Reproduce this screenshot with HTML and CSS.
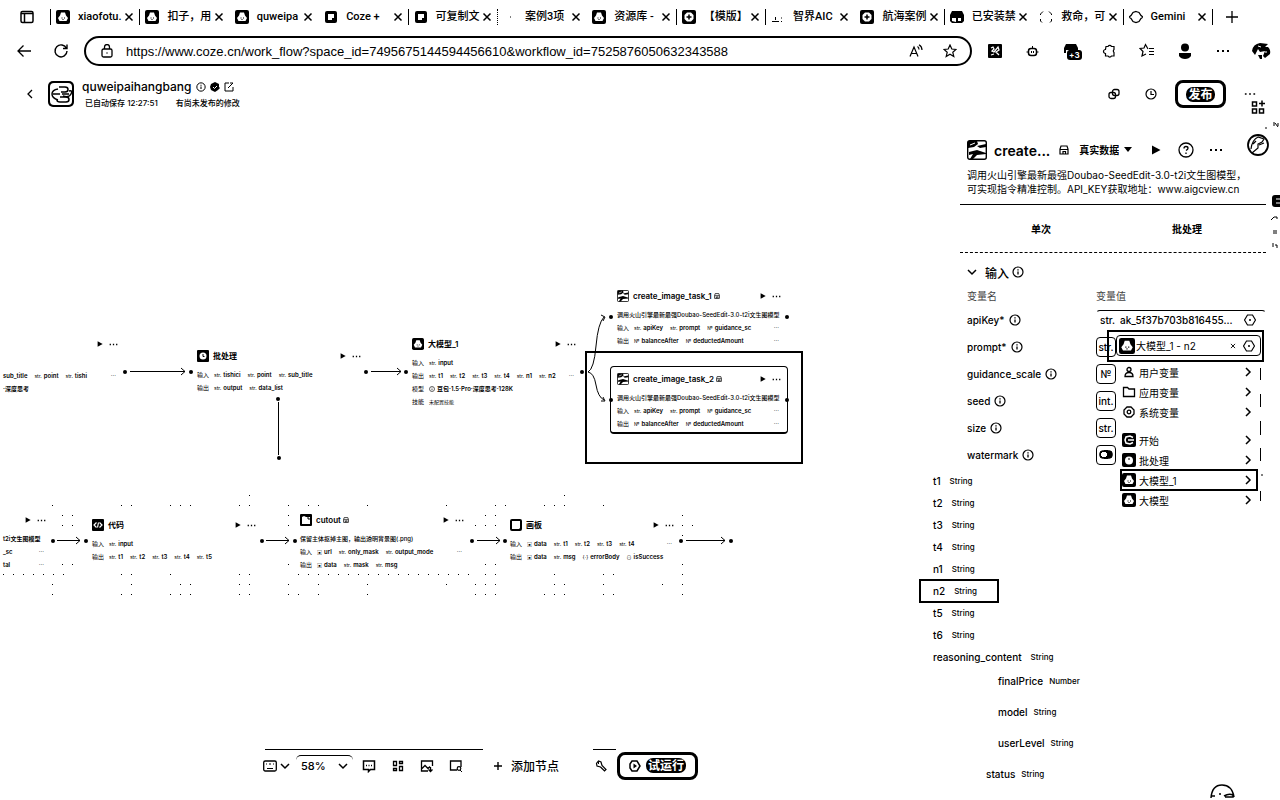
FILE: index.html
```html
<!DOCTYPE html>
<html lang="zh-CN">
<head>
<meta charset="utf-8">
<title>quweipaihangbang - Coze</title>
<link rel="stylesheet" href="styles.css">
</head>
<body>
<svg class="defs" aria-hidden="true">
  <symbol id="x" viewBox="0 0 10 10"><path d="M1.500 1.500l7 7M8.500 1.500l-7 7" fill="none" stroke="currentColor" stroke-width="1.500"/></symbol>
  <symbol id="bot" viewBox="0 0 14 14"><rect width="14" height="14" rx="2"/><path d="M5 2.500h4l1 3 2 2.500-1.500 3h-7L2 8l2-2.500z" fill="#fff"/><path d="M5.500 8h1M8 8h1M6.500 9.500h1" stroke="#000"/></symbol>
  <symbol id="cz" viewBox="0 0 14 14"><rect x="1" y="1" width="12" height="12" rx="2"/><path d="M4 4h6v4H8v2H4z" fill="#fff"/></symbol>
  <symbol id="ring" viewBox="0 0 14 14"><rect width="14" height="14" rx="2"/><path d="M5 2.500h4L11.500 5v4L9 11.500H5L2.500 9V5z" fill="#fff"/><path d="M7 4.500v5M4.500 7h5" stroke="#000" stroke-width="1.500"/></symbol>
  <symbol id="info" viewBox="0 0 12 12"><circle cx="6" cy="6" r="5" fill="none" stroke="currentColor" stroke-width="1.200"/><path d="M6 5.500v3M6 3.300v1.200" stroke="currentColor" stroke-width="1.300"/></symbol>
  <symbol id="hex" viewBox="0 0 12 12"><path d="M3.500 1h5L11.500 6l-3 5h-5L.5 6z" fill="none" stroke="currentColor" stroke-width="1.200"/><circle cx="6" cy="6" r="1"/></symbol>
  <symbol id="play" viewBox="0 0 10 10"><path d="M1 .5L9.500 5 1 9.500z"/></symbol>
  <symbol id="down" viewBox="0 0 10 10"><path d="M1 3l4 4 4-4" fill="none" stroke="currentColor" stroke-width="1.500"/></symbol>
  <symbol id="right" viewBox="0 0 10 10"><path d="M3 1l4 4-4 4" fill="none" stroke="currentColor" stroke-width="1.500"/></symbol>
  <symbol id="dots" viewBox="0 0 14 4"><path d="M1 1h2v2H1zM6 1h2v2H6zM11 1h2v2h-2z"/></symbol>
  <symbol id="pic" viewBox="0 0 20 20"><rect x=".7" y=".7" width="18.600" height="18.600" rx="2" fill="#fff" stroke="#000" stroke-width="1.400"/><path d="M1 1h9l1 3-4 3-6 1zM10 6l9-2v3l-6 1zM2 12l8-2 9 3v1l-9 1-4 4H3l3-5-4 1z"/><path d="M3 5l5-2" stroke="#fff"/></symbol>
  <symbol id="store" viewBox="0 0 10 10"><path d="M2 1h6l1 3v5H1V4zM1 4.500h8M4 9V6.500h2.500V9" fill="none" stroke="currentColor" stroke-width="1.200"/></symbol>
</svg>

<nav class="tabs" aria-label="标签页">
  <button class="side" aria-label="标签栏"><svg viewBox="0 0 14 14"><rect x="1" y="1.500" width="12" height="11" rx="1.500" fill="none" stroke="#000" stroke-width="1.500"/><path d="M1 3.500h12M4.500 3v9" stroke="#000" stroke-width="1.500"/></svg></button>
  <div class="tablist">
    <div class="tab"><svg><use href="#bot"/></svg><a href="#">xiaofotu.</a><button aria-label="关闭"><svg><use href="#x"/></svg></button></div>
    <div class="tab"><svg><use href="#bot"/></svg><a href="#">扣子，用</a><button aria-label="关闭"><svg><use href="#x"/></svg></button></div>
    <div class="tab open"><svg><use href="#bot"/></svg><a href="#">quweipa</a><button aria-label="关闭"><svg><use href="#x"/></svg></button></div>
    <div class="tab open"><svg><use href="#cz"/></svg><a href="#">Coze +</a><button aria-label="关闭"><svg><use href="#x"/></svg></button></div>
    <div class="tab"><svg><use href="#cz"/></svg><a href="#">可复制文</a><button aria-label="关闭"><svg><use href="#x"/></svg></button></div>
    <div class="tab faint"><svg viewBox="0 0 14 14"><path d="M7 7h1"  stroke="#000"/></svg><a href="#">案例3项</a><button aria-label="关闭"><svg><use href="#x"/></svg></button></div>
    <div class="tab open"><svg><use href="#bot"/></svg><a href="#">资源库 -</a><button aria-label="关闭"><svg><use href="#x"/></svg></button></div>
    <div class="tab"><svg><use href="#ring"/></svg><a href="#">【模版】</a><button aria-label="关闭"><svg><use href="#x"/></svg></button></div>
    <div class="tab"><svg viewBox="0 0 14 14"><path d="M1 11.500h7M4.500 7v3M10 11.500h1M10 8h1" stroke="#000"/></svg><a href="#">智界AIC</a><button aria-label="关闭"><svg><use href="#x"/></svg></button></div>
    <div class="tab open"><svg><use href="#ring"/></svg><a href="#">航海案例</a><button aria-label="关闭"><svg><use href="#x"/></svg></button></div>
    <div class="tab"><svg viewBox="0 0 14 14"><path d="M2 1h10l2 4v6l-2 2H2l-2-2V5z"/><path d="M2 11V8h4v4zM8 11V8h3v3z" fill="#fff"/></svg><a href="#">已安装禁</a><button aria-label="关闭"><svg><use href="#x"/></svg></button></div>
    <div class="tab open"><svg viewBox="0 0 14 14"><path d="M4 1.500L1.500 4v1M10 1.500L12.500 4v1M1.500 9v2L3 12.500M12.500 9v2L11 12.500" fill="none" stroke="#000"/></svg><a href="#">救命，可</a><button aria-label="关闭"><svg><use href="#x"/></svg></button></div>
    <div class="tab"><svg viewBox="0 0 14 14"><path d="M7 1.500l3 1 2 3 2 1.500-2 1.500-2 3-3 1-3-1-2-3L0 7l2-1.500 2-3z" fill="none" stroke="#000" stroke-width="1.300"/></svg><a href="#">Gemini</a><button aria-label="关闭"><svg><use href="#x"/></svg></button></div>
  </div>
  <button class="newtab" aria-label="新建标签页"><svg viewBox="0 0 14 14"><path d="M7 1v12M1 7h12" stroke="#000" stroke-width="1.300"/></svg></button>
</nav>

<div class="bar">
  <button aria-label="后退"><svg class="i16" viewBox="0 0 16 16"><path d="M14 8H1M6.500 2.500L1 8l5.500 5.500" fill="none" stroke="#000" stroke-width="1.300"/></svg></button>
  <button aria-label="刷新"><svg class="i16" viewBox="0 0 16 16"><path d="M13.500 5.500A6 6 0 1 0 14 8M14 1.500v4h-4" fill="none" stroke="#000" stroke-width="1.400"/></svg></button>
  <div class="url">
    <svg class="i14" viewBox="0 0 14 14"><rect x="2" y="5" width="10" height="8" rx="1.500" fill="none" stroke="#000" stroke-width="1.300"/><path d="M4.500 5V3a2.500 2.500 0 0 1 5 0v2M6.500 9h1" fill="none" stroke="#000" stroke-width="1.300"/></svg>
    <input aria-label="地址" value="https://www.coze.cn/work_flow?space_id=7495675144594456610&amp;workflow_id=7525876050632343588">
    <button class="read" aria-label="朗读"><svg class="i14" viewBox="0 0 14 14"><path d="M1 12.500L5 3l4 9.500M2.500 9.500h5M8.500 2.500q1.500 1 1.500 3M10 .8q3 1.700 3 5.200" fill="none" stroke="#000" stroke-width="1.200"/></svg></button>
    <button aria-label="收藏"><svg class="i14" viewBox="0 0 14 14"><path d="M7 1l1.800 4 4.200.4-3.200 2.900 1 4.200L7 10.300l-3.800 2.200 1-4.200L1 5.400 5.200 5z" fill="none" stroke="#000" stroke-width="1.200"/></svg></button>
  </div>
  <div class="ext">
    <button aria-label="扩展一"><svg class="i14" viewBox="0 0 14 14"><rect width="14" height="14" rx="1"/><path d="M3 4l2-1 1 2-2 2 2 1 4-5 1 3-3 2 3 3M3 11l3-1" fill="none" stroke="#fff" stroke-width="1.300"/></svg></button>
    <button aria-label="助手"><svg class="i14" viewBox="0 0 14 14"><rect x="2.500" y="4.500" width="8" height="7" rx="2.500" fill="none" stroke="#000" stroke-width="1.500"/><path d="M6.500 2V4.500M0.500 8H2M11 8h1.500M5.500 7v2M7.500 7v2" stroke="#000"/></svg></button>
    <button class="plus" aria-label="扩展二"><svg class="i16" viewBox="0 0 16 16"><path d="M3 1h10l2 4v5H1V5z"/><path d="M3 10V7h3v3zM9 9V7h3v2z" fill="#fff"/></svg><span>+3</span></button>
    <button aria-label="扩展程序"><svg class="i14" viewBox="0 0 14 14"><path d="M4 2.500h2a2 2 0 0 1 3.500 0H12V5.500a2 2 0 0 0 0 3V12H9.500a2 2 0 0 1-3.500 0H3.500V9.500a2 2 0 0 1 0-4z" fill="none" stroke="#000" stroke-width="1.200"/></svg></button>
    <button aria-label="收藏夹"><svg class="i16" viewBox="0 0 16 16"><path d="M9 6L6.500 1.500 5 5 1 5.500l3 3-1 4.500L7 11M10 5.500h5M10 8.500h5M10 11.500h5" fill="none" stroke="#000" stroke-width="1.200"/></svg></button>
    <button aria-label="个人"><svg class="i16" viewBox="0 0 16 16"><circle cx="8" cy="4.500" r="4"/><path d="M2 10h12v3q-2 3-6 3t-6-3z"/></svg></button>
    <button aria-label="更多"><svg class="i14" viewBox="0 0 14 4"><use href="#dots"/></svg></button>
    <button aria-label="Copilot"><svg class="i20" viewBox="0 0 20 20"><path d="M1 10q1-7 8-8l8 1-3 3h3q3 3 2 7l-5 4-2-2 2-5-5 1-2-3-3 6zM7 14h4v4H9z"/><path d="M7 5l3 1M14 11h2" stroke="#fff"/></svg></button>
  </div>
</div>

<header class="app">
  <button aria-label="返回"><svg class="i10" viewBox="0 0 10 10"><path d="M7 1L3 5l4 4" fill="none" stroke="#000" stroke-width="1.300"/></svg></button>
  <svg class="logo" viewBox="0 0 26 26"><rect width="26" height="26" rx="5"/><rect x="2" y="2" width="22" height="22" rx="4" fill="#fff"/><g fill="none" stroke="#000" stroke-width="1.500"><path d="M11 6h6q3 0 3 2.500T17 11h-4M12 16h6q3 0 3 2.500T18 21h-6q-3 0-3-2"/><path d="M14 13h7M15 15q6 2 8-2t-2-3M10 8q-6 1-6 5t6 6M5 13h7"/></g></svg>
  <div class="names">
    <h1>quweipaihangbang <svg class="i10"><use href="#info"/></svg><svg class="i10" viewBox="0 0 10 10"><path d="M5 0l2 1 2 1v3l1 1-2 2-3 2-2-1-2-1-1-3 1-3 2-1z"/><path d="M3 5l1.500 1.500L7 4" stroke="#fff" fill="none"/></svg><svg class="i10" viewBox="0 0 10 10"><path d="M5 1H1v8h8V5M4 6l5-5M6 1h3" fill="none" stroke="#000"/></svg></h1>
    <p><span>已自动保存 12:27:51</span><span>有尚未发布的修改</span></p>
  </div>
  <div class="acts">
    <button aria-label="复制"><svg class="i12" viewBox="0 0 12 12"><rect x="1" y="4.500" width="6.500" height="6" rx="2" fill="none" stroke="#000" stroke-width="1.300"/><rect x="4.500" y="1.500" width="6.500" height="6" rx="2" fill="none" stroke="#000" stroke-width="1.300"/></svg></button>
    <button aria-label="历史"><svg class="i12" viewBox="0 0 12 12"><circle cx="6" cy="6" r="5" fill="none" stroke="#000" stroke-width="1.200"/><path d="M6 3v3.500h3" fill="none" stroke="#000" stroke-width="1.200"/></svg></button>
    <button class="solid"><span>发布</span></button>
    <button class="more" aria-label="更多"><svg viewBox="0 0 14 4"><use href="#dots"/></svg></button>
  </div>
  <svg class="apps" viewBox="0 0 14 14"><path d="M1.500 2h4v4h-4zM1.500 9h4v4h-4zM8.500 9h4v4h-4zM8 3.500h6M11 .5v6" fill="none" stroke="#000" stroke-width="1.500"/></svg>
</header>

<main>
  <section class="canvas" aria-label="工作流画布">
    <svg class="edges" width="960" height="680" aria-hidden="true">
      <g class="lines">
        <path d="M130 251.500h55M181 248l4 3.500-4 3.500M371 251.500h30M397 248l4 3.500-4 3.500M278.500 282v53M57 420.500h23M76 417l4 3.500-4 3.500M266 420.500h23M285 417l4 3.500-4 3.500M477 420.500h23M496 417l4 3.500-4 3.500M686 420.500h39M721 417l4 3.500-4 3.500"/>
        <path d="M588 252q6-3 8-26t8-29M601 195l4 2-2 4M588 252q6 1 8 13t8 15M601 281h4l-2-4"/>
      </g>
      <path class="grid" d="M249 375h1M52 385h1M121 385h1M131 385h1M170 385h1M180 385h1M190 385h1M239 385h1M249 385h1M288 385h1M308 385h1M318 385h1M367 385h1M62 395h1M72 395h1M288 395h1M62 405h1M72 405h1M288 405h1M62 444h1M72 444h1M288 444h1M121 454h1M131 454h1M170 454h1M239 454h1M249 454h1M52 464h1M131 464h1M180 464h1M190 464h1M239 464h1M249 464h1M288 464h1M318 464h1M367 464h1M52 474h1M121 474h1M131 474h1M170 474h1M180 474h1M190 474h1M239 474h1M249 474h1M288 474h1M298 474h1M318 474h1M367 474h1M564 375h1M446 385h1M495 385h1M505 385h1M544 385h1M554 385h1M564 385h1M603 385h1M485 395h1M495 395h1M682 395h1M475 405h1M485 405h1M495 405h1M682 405h1M692 405h1M682 415h1M485 444h1M495 444h1M682 444h1M485 454h1M495 454h1M554 454h1M603 454h1M613 454h1M682 454h1M446 464h1M475 464h1M485 464h1M495 464h1M554 464h1M564 464h1M603 464h1M662 464h1M682 464h1M475 474h1M485 474h1M495 474h1M544 474h1M554 474h1M564 474h1M603 474h1M613 474h1M682 474h1"/>
      <path class="grid dashed" d="M3 454h65M298 454h175"/>
      <g><circle cx="125" cy="252" r="2"/><circle cx="191" cy="252" r="2"/><circle cx="366" cy="252" r="2"/><circle cx="406" cy="252" r="2"/><circle cx="582" cy="252" r="2"/><circle cx="278" cy="279" r="2"/><circle cx="279" cy="338" r="2"/><circle cx="611" cy="197" r="2"/><circle cx="787" cy="197" r="2"/><circle cx="611" cy="280" r="2"/><circle cx="787" cy="280" r="2"/><circle cx="53" cy="421" r="2"/><circle cx="86" cy="421" r="2"/><circle cx="262" cy="421" r="2"/><circle cx="295" cy="421" r="2"/><circle cx="472" cy="421" r="2"/><circle cx="505" cy="421" r="2"/><circle cx="681" cy="421" r="2"/><circle cx="731" cy="421" r="2"/></g>
    </svg>

    <div class="mark"></div>

    <article class="node n0">
      <header><svg class="run"><use href="#play"/></svg><svg class="dt"><use href="#dots"/></svg></header>
      <p></p>
      <p><b>sub_title</b><i>str.</i><b>point</b><i>str.</i><b>tishi</b><em>···</em></p>
      <p><b>·深度思考</b></p>
    </article>
    <article class="node n1">
      <header><svg class="ic" viewBox="0 0 12 12"><rect width="12" height="12" rx="1"/><circle cx="6" cy="6" r="3.500" fill="#fff"/><path d="M6 4v2.500h1.500" fill="none" stroke="#000"/></svg><h2>批处理</h2><svg class="run"><use href="#play"/></svg><svg class="dt"><use href="#dots"/></svg></header>
      <p><span>输入</span><i>str.</i><b>tishici</b><i>str.</i><b>point</b><i>str.</i><b>sub_title</b></p>
      <p><span>输出</span><i>str.</i><b>output</b><i>str.</i><b>data_list</b></p>
    </article>
    <article class="node n2">
      <header><svg class="ic"><use href="#bot"/></svg><h2>大模型_1</h2><svg class="run"><use href="#play"/></svg><svg class="dt"><use href="#dots"/></svg></header>
      <p><span>输入</span><i>str.</i><b>input</b></p>
      <p><span>输出</span><i>str.</i><b>t1</b><i>str.</i><b>t2</b><i>str.</i><b>t3</b><i>str.</i><b>t4</b><i>str.</i><b>n1</b><i>str.</i><b>n2</b><em>···</em></p>
      <p><span>模型</span><svg class="mini"><use href="#info"/></svg><b>豆包·1.5·Pro·深度思考·128K</b></p>
      <p><span>技能</span><i>未配置技能</i></p>
    </article>
    <article class="node n3">
      <header><svg class="ic"><use href="#pic"/></svg><h2>create_image_task_1 <svg class="mini"><use href="#store"/></svg></h2><svg class="run"><use href="#play"/></svg><svg class="dt"><use href="#dots"/></svg></header>
      <p class="desc">调用火山引擎最新最强Doubao-SeedEdit-3.0-t2i文生图模型</p>
      <p><span>输入</span><i>str.</i><b>apiKey</b><i>str.</i><b>prompt</b><i>№</i><b>guidance_sc</b><em>···</em></p>
      <p><span>输出</span><i>№</i><b>balanceAfter</b><i>№</i><b>deductedAmount</b><em>···</em></p>
    </article>
    <article class="node n4">
      <header><svg class="ic"><use href="#pic"/></svg><h2>create_image_task_2 <svg class="mini"><use href="#store"/></svg></h2><svg class="run"><use href="#play"/></svg><svg class="dt"><use href="#dots"/></svg></header>
      <p class="desc">调用火山引擎最新最强Doubao-SeedEdit-3.0-t2i文生图模型</p>
      <p><span>输入</span><i>str.</i><b>apiKey</b><i>str.</i><b>prompt</b><i>№</i><b>guidance_sc</b><em>···</em></p>
      <p><span>输出</span><i>№</i><b>balanceAfter</b><i>№</i><b>deductedAmount</b><em>···</em></p>
    </article>
    <article class="node n5">
      <header><svg class="run"><use href="#play"/></svg><svg class="dt"><use href="#dots"/></svg></header>
      <p><b>t2i文生图模型</b></p>
      <p><b>_sc</b><em>···</em></p>
      <p><b>tal</b><em>···</em></p>
    </article>
    <article class="node n6">
      <header><svg class="ic" viewBox="0 0 12 12"><rect width="12" height="12" rx="1"/><path d="M4.500 3.500L2 6l2.500 2.500M7.500 3.500L10 6 7.500 8.500M6.500 3.500l-1 5" fill="none" stroke="#fff" stroke-width="1.200"/></svg><h2>代码</h2><svg class="run"><use href="#play"/></svg><svg class="dt"><use href="#dots"/></svg></header>
      <p><span>输入</span><i>str.</i><b>input</b></p>
      <p><span>输出</span><i>str.</i><b>t1</b><i>str.</i><b>t2</b><i>str.</i><b>t3</b><i>str.</i><b>t4</b><i>str.</i><b>t5</b></p>
    </article>
    <article class="node n7">
      <header><svg class="ic" viewBox="0 0 12 12"><rect width="12" height="12" rx="1"/><path d="M2 3l2-1 2 1h4v7H2z" fill="#fff"/><path d="M8 2v3h3" stroke="#000" fill="none"/></svg><h2>cutout <svg class="mini"><use href="#store"/></svg></h2><svg class="run"><use href="#play"/></svg><svg class="dt"><use href="#dots"/></svg></header>
      <p class="desc">保留主体抠掉主图，输出透明背景图(.png)</p>
      <p><span>输入</span><i>▣</i><b>url</b><i>str.</i><b>only_mask</b><i>str.</i><b>output_mode</b><em>···</em></p>
      <p><span>输出</span><i>▣</i><b>data</b><i>str.</i><b>mask</b><i>str.</i><b>msg</b></p>
    </article>
    <article class="node n8">
      <header><svg class="ic" viewBox="0 0 12 12"><rect x="1" y="1" width="10" height="10" rx="1" fill="#fff" stroke="#000" stroke-width="2"/><path d="M8 11l3-3v3z"/></svg><h2>画板</h2><svg class="run"><use href="#play"/></svg><svg class="dt"><use href="#dots"/></svg></header>
      <p><span>输入</span><i>▣</i><b>data</b><i>str.</i><b>t1</b><i>str.</i><b>t2</b><i>str.</i><b>t3</b><i>str.</i><b>t4</b><em>···</em></p>
      <p><span>输出</span><i>▣</i><b>data</b><i>str.</i><b>msg</b><i>{·}</i><b>errorBody</b><i>⊙</i><b>isSuccess</b></p>
    </article>
  </section>

  <aside class="panel">
    <div class="ptitle">
      <svg class="i20"><use href="#pic"/></svg><h2>create...</h2><svg class="i10"><use href="#store"/></svg>
      <label class="mode"><select aria-label="数据来源"><option>真实数据</option></select><svg viewBox="0 0 8 6"><path d="M0 0h8L4 5z"/></svg></label>
      <button aria-label="运行"><svg class="i10"><use href="#play"/></svg></button>
      <button aria-label="帮助"><svg class="i16" viewBox="0 0 16 16"><circle cx="8" cy="8" r="7" fill="none" stroke="#000" stroke-width="1.300"/><path d="M6 6.500q0-2 2-2t2 1.700q0 1-2 2.300M8 10.500v1.500" fill="none" stroke="#000" stroke-width="1.300"/></svg></button>
      <button aria-label="更多"><svg class="i14" viewBox="0 0 14 4"><use href="#dots"/></svg></button>
    </div>
    <p class="about">调用火山引擎最新最强Doubao-SeedEdit-3.0-t2i文生图模型，可实现指令精准控制。API_KEY获取地址：www.aigcview.cn</p>
    <div class="modes"><button>单次</button><button>批处理</button></div>
    <h3><svg class="i10"><use href="#down"/></svg>输入<svg class="i12"><use href="#info"/></svg></h3>
    <div class="fields">
      <span class="th">变量名</span><span class="th">变量值</span>
      <label for="f1">apiKey* <svg class="i12"><use href="#info"/></svg></label><div class="field wide"><span>str.</span><input id="f1" value="ak_5f37b703b816455..."><svg class="i12"><use href="#hex"/></svg></div>
      <label for="f2">prompt* <svg class="i12"><use href="#info"/></svg></label><div class="field"><input id="f2" value="str."></div>
      <label for="f3">guidance_scale <svg class="i12"><use href="#info"/></svg></label><div class="field"><input id="f3" value="№"></div>
      <label for="f4">seed <svg class="i12"><use href="#info"/></svg></label><div class="field"><input id="f4" value="int."></div>
      <label for="f5">size <svg class="i12"><use href="#info"/></svg></label><div class="field"><input id="f5" value="str."></div>
      <label for="f6">watermark <svg class="i12"><use href="#info"/></svg></label><div class="field"><input id="f6" class="switch" type="checkbox" checked></div>
    </div>
    <ul class="outs">
      <li><b>finalPrice</b>Number</li>
      <li><b>model</b>String</li>
      <li><b>userLevel</b>String</li>
      <li class="outer"><b>status</b>String</li>
    </ul>

    <div class="menu">
      <div class="picked"><div><svg class="i16"><use href="#bot"/></svg><span>大模型_1 - n2</span><button aria-label="清除"><svg class="i6"><use href="#x"/></svg></button><svg class="i12"><use href="#hex"/></svg></div></div>
      <div class="list">
        <button><svg class="i14" viewBox="0 0 14 14"><circle cx="7" cy="4.500" r="2" fill="none" stroke="#000" stroke-width="1.300"/><path d="M3 11.500q0-4 4-4t4 4z" fill="none" stroke="#000" stroke-width="1.300"/></svg><span>用户变量</span><svg class="i10"><use href="#right"/></svg></button>
        <button><svg class="i14" viewBox="0 0 14 14"><path d="M1.500 2.500h4L7 4h5.500v7.500h-11z" fill="none" stroke="#000" stroke-width="1.300"/></svg><span>应用变量</span><svg class="i10"><use href="#right"/></svg></button>
        <button><svg class="i14" viewBox="0 0 14 14"><path d="M5 2h4l3 3v4l-3 3H5L2 9V5z" fill="none" stroke="#000" stroke-width="1.300"/><circle cx="7" cy="7" r="1.800" fill="none" stroke="#000" stroke-width="1.300"/></svg><span>系统变量</span><svg class="i10"><use href="#right"/></svg></button>
      </div>
      <div class="list nodes">
        <button><svg class="i14" viewBox="0 0 14 14"><rect width="14" height="14" rx="2"/><path d="M11 4.500L8 3 4 4 3 7l1 3 4 1 3-1.500M6 7h6" fill="none" stroke="#fff" stroke-width="1.500"/></svg><span>开始</span><svg class="i10"><use href="#right"/></svg></button>
        <button><svg class="i14" viewBox="0 0 14 14"><rect width="14" height="14" rx="2"/><circle cx="7" cy="7.500" r="4" fill="#fff"/><path d="M7 5v2" stroke="#000"/></svg><span>批处理</span><svg class="i10"><use href="#right"/></svg></button>
        <button class="on"><svg class="i14"><use href="#bot"/></svg><span>大模型_1</span><svg class="i10"><use href="#right"/></svg></button>
        <button><svg class="i14"><use href="#bot"/></svg><span>大模型</span><svg class="i10"><use href="#right"/></svg></button>
      </div>
    </div>

    <ul class="tree">
      <li><b>t1</b>String</li>
      <li><b>t2</b>String</li>
      <li><b>t3</b>String</li>
      <li><b>t4</b>String</li>
      <li><b>n1</b>String</li>
      <li class="on"><b>n2</b>String</li>
      <li><b>t5</b>String</li>
      <li><b>t6</b>String</li>
      <li><b>reasoning_content</b>String</li>
    </ul>

    <svg class="edge-marks" viewBox="0 0 40 680" aria-hidden="true">
      <circle cx="18" cy="25" r="10" fill="#fff" stroke="#000" stroke-width="1.800"/><path d="M11 29q1-9 7-12l6 2-2 3-4 2v4l-6 5M19 25l5-2M13 24l3-3" fill="none" stroke="#000" stroke-width="1.200"/><path d="M25 8h2M34 2v4M35 3l3 4M38 3v3" stroke="#000"/>
      <path d="M40 75h-5q-3 0-3 3v6q0 3 3 3h5z"/><path d="M36 79h4M36 83h4" stroke="#fff"/>
      <path d="M31 100l3-3h3v2M34 110v4M36 110v4M33 123v4M35 125h2v3" fill="none" stroke="#000"/>
      <path d="M20.500 248v12M20.500 274v13M20.500 301v14M20.500 328v13M21 355h2M20.500 371v10" stroke="#000"/>
    </svg>
    <svg class="face" viewBox="0 0 26 14" aria-hidden="true"><path d="M2 14Q3 1 13 1t12 12M2 12h4M10 10h2M15 12q5-3 9-1v2h-8" fill="none" stroke="#000" stroke-width="1.500"/></svg>
  </aside>

  <div class="dock">
    <div class="group">
      <button class="kb" aria-label="交互模式"><svg class="i14" viewBox="0 0 14 14"><rect x=".7" y="2" width="12.600" height="10" rx="1.500" fill="none" stroke="#000" stroke-width="1.300"/><path d="M4 9.500h6M3 5h1M6 5h2M10 5h1" stroke="#000"/></svg><svg class="i10"><use href="#down"/></svg></button>
      <label class="zoom"><select aria-label="缩放"><option>58%</option></select><svg class="i10"><use href="#down"/></svg></label>
      <button aria-label="注释"><svg class="i14" viewBox="0 0 14 14"><path d="M1.500 2h11v8.500h-4L6.500 12.500V10.500h-5z" fill="none" stroke="#000" stroke-width="1.500"/><path d="M4 6.500h1M6.500 6.500h1M9 6.500h1" stroke="#000" stroke-width="1.500"/></svg></button>
      <button aria-label="整理"><svg class="i14" viewBox="0 0 14 14"><path d="M2.500 2.500h3v4h-3zM8.500 2.500h3v2h-3zM2.500 9.500h3v2h-3zM8.500 7.500h3v4h-3z" fill="none" stroke="#000" stroke-width="1.300"/></svg></button>
      <button aria-label="导出图片"><svg class="i14" viewBox="0 0 14 14"><path d="M8 12H1.500V2h11v5M2 9.500l3-3 3 3 2-2M10.500 8v4.500M8.500 10.500l2 2 2-2" fill="none" stroke="#000" stroke-width="1.300"/></svg></button>
      <button aria-label="缩略图"><svg class="i14" viewBox="0 0 14 14"><path d="M8 11H1.500V2h10.500v6" fill="none" stroke="#000" stroke-width="1.300"/><circle cx="10" cy="9.500" r="1.800" fill="none" stroke="#000" stroke-width="1.200"/><path d="M11 11l2 2" stroke="#000"/></svg></button>
      <button class="add"><svg class="i10" viewBox="0 0 10 10"><path d="M5 1v8M1 5h8" stroke="#000" stroke-width="1.400"/></svg>添加节点</button>
    </div>
    <div class="group two">
      <button aria-label="调试"><svg class="i12" viewBox="0 0 12 12"><path d="M5.500 7L9.500 11l1.500-1.500-4-4L6 2 3.500 1 1.500 3.500 2 6z" fill="none" stroke="#000" stroke-width="1.200"/><path d="M3.500 1.500v2.500" stroke="#000"/></svg></button>
      <button class="solid"><svg class="i12" viewBox="0 0 12 12"><path d="M3 1h5l3 5-3 5H3L1 8V4z" fill="none" stroke="#000" stroke-width="1.500"/><path d="M4.500 3.500L8 6 4.500 8.500z"/></svg><span>试运行</span></button>
    </div>
  </div>
</main>
</body>
</html>
```
FILE: styles.css
```css
* { box-sizing: border-box; margin: 0; padding: 0; }
body {
  min-height: 100vh;
  display: flex;
  flex-direction: column;
  background: #fff;
  color: #000;
  font-family: Inter, "Noto Sans CJK SC", sans-serif;
  font-size: 10px;
  overflow-x: hidden;
}
button, input, select { font: inherit; color: inherit; background: none; border: 0; outline: 0; appearance: none; }
button { display: flex; align-items: center; justify-content: center; cursor: pointer; }
a { color: inherit; text-decoration: none; }
svg { display: block; flex: none; }
ul { list-style: none; }
.defs { position: absolute; width: 0; height: 0; }
.i6 { width: 6px; height: 6px; }
.i10 { width: 10px; height: 10px; }
.i12 { width: 12px; height: 12px; }
.i14 { width: 14px; height: 14px; }
.i16 { width: 16px; height: 16px; }
.i20 { width: 20px; height: 20px; }

/* Browser tabs */
.tabs { display: flex; align-items: center; height: 34px; padding-right: 41px; }
.side { width: 50px; padding-left: 4px; }
.side svg { width: 14px; height: 14px; }
.tablist { flex: 1; display: grid; grid-template-columns: repeat(13, minmax(0, 1fr)); border-right: 1px solid #000; }
.tab { display: flex; align-items: center; height: 16px; padding: 0 5px; border-left: 1px solid #000; font-family: Roboto, "Noto Sans CJK SC", sans-serif; font-size: 11px; font-weight: 500; }
.tab.open { border-color: transparent; }
.tab.faint { border-left-style: dotted; }
.tab > svg { width: 14px; height: 14px; margin-right: 8px; }
.tab a { flex: 1; white-space: nowrap; line-height: 16px; }
.tab button svg { width: 10px; height: 10px; }
.newtab { width: 14px; margin-left: 12px; }
.newtab svg { width: 14px; height: 14px; }

/* Address bar */
.bar { display: flex; align-items: center; height: 34px; padding-left: 17px; }
.bar > button + button { margin: 0 15px 0 20px; }
.url { flex: 1; display: flex; align-items: center; height: 30px; padding: 0 13px 0 14px; border: 2px solid #000; border-radius: 15px; font-family: "Liberation Sans", sans-serif; font-size: 13px; }
.url input { flex: 1; min-width: 0; padding-left: 12px; }
.read { margin-right: 20px; }
.ext { display: grid; grid-template-columns: repeat(8, 38px); margin-left: 4px; justify-items: center; align-items: center; }
.plus { position: relative; }
.plus span { position: absolute; left: 4px; top: 7px; padding: 0 2px; border-radius: 3px; background: #000; color: #fff; font-size: 8px; font-weight: 700; line-height: 10px; }

/* App header */
.app { display: flex; align-items: center; height: 52px; padding: 0 24px 0 25px; position: relative; }
.logo { width: 26px; height: 26px; margin: 0 8px 0 13px; }
.names h1 { display: flex; align-items: center; gap: 4px; font-size: 12px; font-weight: 500; line-height: 18px; }
.names p { display: flex; gap: 18px; padding-left: 3px; font-size: 8px; font-weight: 500; line-height: 14px; }
.acts { display: flex; align-items: center; margin-left: auto; }
.acts > button + button { margin-left: 25px; }
.acts > .solid + .more, .acts > button + .solid { margin-left: 18px; }
.acts .solid { width: 51px; }
.acts .more svg { width: 12px; height: 4px; }
.solid { gap: 5px; height: 28px; border: 3px solid #000; border-radius: 8px; font-size: 12px; font-weight: 700; }
.solid span { padding: 0 2px; border-radius: 7px; background: #000; color: #fff; line-height: 15px; }
.apps { position: absolute; right: 15px; bottom: 6px; width: 14px; height: 14px; }

/* Workspace */
main { flex: 1; display: grid; grid-template-columns: minmax(0, 1fr) 320px; position: relative; }
.canvas { position: relative; overflow: hidden; }
.edges { position: absolute; left: 0; top: 0; }
.lines { fill: none; stroke: #000; }
.grid { stroke: #000; stroke-width: 1; shape-rendering: crispEdges; }
.dashed { stroke-dasharray: 1 9; }
.mark { position: absolute; left: 585px; top: 231px; width: 218px; height: 113px; border: 2px solid #000; }

.node { position: absolute; width: 170px; font-size: 6px; }
.node header { display: flex; align-items: center; height: 12px; margin-bottom: 6px; }
.node h2 { display: flex; align-items: center; gap: 2px; font-size: 8px; font-weight: 600; line-height: 12px; white-space: nowrap; }
.ic { width: 12px; height: 12px; margin-right: 4px; }
.mini { width: 6px; height: 6px; }
.run { width: 6px; height: 6px; margin-left: auto; }
.dt { width: 9px; height: 3px; margin: 0 6px; }
.node p { display: flex; align-items: center; height: 13px; gap: 2px; white-space: nowrap; }
.node span { margin-right: 3px; }
.node i { font-style: normal; font-size: 5px; }
.node b { font-weight: 600; margin-right: 5px; }
.node em { margin-left: auto; margin-right: 8px; font-style: normal; }
.node .desc { font-weight: 500; }
.n0 { left: 3px; top: 218px; width: 121px; }
.n1 { left: 197px; top: 230px; }
.n2 { left: 412px; top: 218px; }
.n3 { left: 617px; top: 170px; }
.n4 { left: 610px; top: 246px; width: 178px; padding: 6px 0 6px 6px; border: 1px solid #000; border-bottom-width: 2px; border-radius: 4px; height: 68px; }
.n5 { left: 3px; top: 394px; width: 49px; }
.n6 { left: 92px; top: 399px; }
.n7 { left: 300px; top: 394px; }
.n8 { left: 510px; top: 399px; }

/* Settings panel */
.panel { position: relative; padding: 20px 14px 0 0; }
.ptitle { display: flex; align-items: center; height: 20px; padding-left: 7px; }
.ptitle h2 { margin: 0 9px 0 7px; font-size: 14px; font-weight: 600; }
.mode { display: flex; align-items: center; gap: 5px; margin-left: 10px; font-weight: 600; }
.mode svg { width: 8px; height: 6px; }
.ptitle button { margin-left: 19px; }
.ptitle button + button { margin-left: 17px; }
.ptitle button:last-child { margin-left: 15px; }
.about { padding: 8px 12px 8px 7px; line-height: 14px; border-bottom: 1px solid #000; }
.modes { display: grid; grid-template-columns: 1fr 1fr; height: 48px; padding: 0 6px 0 8px; border-bottom: 1px dashed #000; font-weight: 600; }
.panel h3 { display: flex; align-items: center; height: 38px; padding-left: 7px; font-size: 12px; font-weight: 500; }
.panel h3 svg:first-child { margin-right: 8px; }
.panel h3 svg:last-child { margin-left: 3px; }
.fields { display: grid; grid-template-columns: 129px 1fr; grid-template-rows: 22px; grid-auto-rows: 27px; align-items: center; padding-left: 7px; margin-top: -7px; }
.th { color: #444; }
.fields label { display: flex; align-items: center; gap: 4px; font-weight: 500; }
.field { display: flex; align-items: center; width: 20px; height: 20px; border: 1px solid #000; border-radius: 4px; font-weight: 500; }
.field input { width: 100%; min-width: 0; text-align: center; }
.wide { width: auto; padding: 0 9px 0 3px; border-left-color: transparent; border-right-color: transparent; border-bottom-color: transparent; }
.wide input { flex: 1; text-align: left; padding-left: 5px; }
.field .switch { width: 14px; height: 9px; margin: auto; border: 1px solid #000; border-radius: 5px; background: radial-gradient(circle at 4px 50%, #fff 3px, #000 3px); }
.outs { padding: 197px 0 0 38px; font-size: 8px; font-weight: 500; }
.outs li { display: flex; align-items: center; gap: 6px; height: 31px; }
.outs b { font-size: 10px; font-weight: 500; }
.outs .outer { margin-left: -12px; }

/* Variable picker */
.menu { position: absolute; left: 147px; top: 210px; width: 157px; }
.picked { height: 32px; padding: 3px 1px 4px 7px; border: 2px solid #000; }
.picked div { display: flex; align-items: center; gap: 1px; height: 21px; padding: 0 5px 0 2px; background: #fff; border: 1px solid #000; border-radius: 4px; white-space: nowrap; }
.picked button { margin: 0 6px 0 auto; }
.list { margin-left: 10px; padding: 0 7px 0 4px; background: #fff; }
.list button { width: 100%; height: 20px; padding: 0 4px 0 1px; }
.list span { flex: 1; padding-left: 3px; text-align: left; }
.nodes { padding-top: 8px; }
.list .on { outline: 2px solid #000; outline-offset: -1px; }

.tree { position: absolute; left: -40px; top: 350px; width: 150px; font-size: 8px; font-weight: 500; }
.tree li { display: flex; align-items: center; gap: 9px; height: 22px; padding-left: 13px; white-space: nowrap; }
.tree b { font-size: 10px; font-weight: 500; }
.tree .on { width: 78px; outline: 2px solid #000; outline-offset: -1px; }
.edge-marks { position: absolute; right: 0; top: 0; width: 40px; height: 680px; pointer-events: none; }
.face { position: absolute; right: 45px; bottom: 2px; width: 26px; height: 14px; }

/* Bottom dock */
.dock { position: absolute; left: 257px; bottom: 18px; display: flex; align-items: center; gap: 30px; height: 33px; }
.group { display: flex; align-items: center; gap: 15px; height: 33px; padding-left: 6px; background: linear-gradient(#000, #000) 8px 0 / 218px 1px no-repeat; }
.kb { gap: 3px; margin-right: -9px; }
.zoom { display: flex; align-items: center; width: 57px; height: 21px; padding: 0 5px; border-top: 1px solid #000; border-radius: 5px; font-size: 11px; font-weight: 500; margin-right: -6px; }
.zoom select { flex: 1; }
.add { gap: 8px; margin-left: 15px; font-size: 12px; font-weight: 500; }
.two { gap: 10px; background-position: 4px 0; background-size: 23px 1px; }
.two .solid { width: 81px; }
```
